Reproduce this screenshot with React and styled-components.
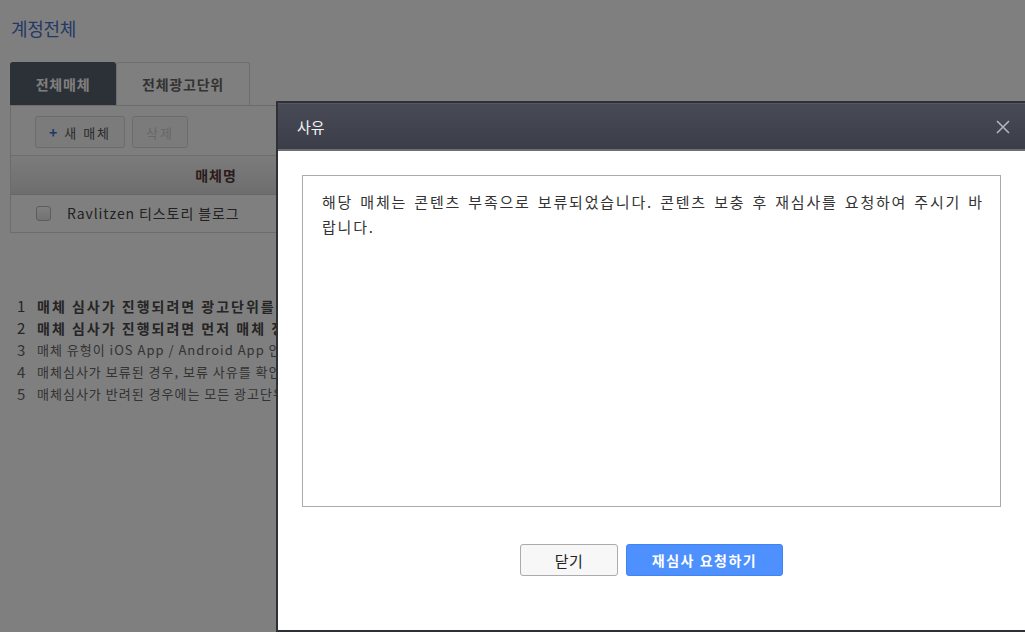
import React from 'react';
import styled, {createGlobalStyle} from "styled-components";

const GlobalStyle = createGlobalStyle`
  html, body {
    margin: 0;
    padding: 0;
    overflow: hidden;
    background: #fff;
  }
  body {
    font-family: "Noto Sans CJK KR", "Noto Sans", sans-serif;
    font-size: 13px;
    color: #555;
  }
`

const Page = styled.div`
  padding: 14px 10px 0 10px;
  width: 1005px;
`

const PageTitle = styled.h1`
  margin: 0 0 20px 1px;
  font-size: 18px;
  font-weight: normal;
  color: #4a72cc;
  letter-spacing: -0.3px;
  line-height: 28px;
`

const Tabs = styled.div`
  display: flex;
  height: 43px;
`

const Tab = styled.div`
  width: ${p => p.$w}px;
  display: flex;
  align-items: center;
  justify-content: center;
  font-size: 14px;
  font-weight: bold;
  letter-spacing: 0.8px;
  border: 1px solid ${p => p.$active ? '#58606e' : '#dcdcdc'};
  border-bottom: none;
  border-radius: 3px 3px 0 0;
  background: ${p => p.$active ? '#58606e' : '#fff'};
  color: ${p => p.$active ? '#fff' : '#666'};
  box-sizing: border-box;
`

const Panel = styled.div`
  border: 1px solid #d8d8d8;
  background: #fcfcfc;
`

const Toolbar = styled.div`
  display: flex;
  gap: 7px;
  padding: 10px 24px 7px 24px;
  border-bottom: 1px solid #d8d8d8;
`

const ToolButton = styled.div`
  height: 32px;
  padding: 0 13px;
  display: flex;
  align-items: center;
  gap: 5px;
  box-sizing: border-box;
  border: 1px solid #d6d6d6;
  border-radius: 3px;
  background: #f6f6f6;
  font-size: 13px;
  color: ${p => p.$disabled ? '#d0d0d0' : '#555'};
  letter-spacing: 2px;
`

const Plus = styled.span`
  color: #3f6fd8;
  font-weight: bold;
  font-size: 14px;
`

const Columns = styled.div`
  display: grid;
  grid-template-columns: 48px 314px 1fr;
  align-items: center;
`

const TableHead = styled(Columns)`
  height: 38px;
  background: linear-gradient(#f8f8f8, #dcdcdc);
  border-bottom: 1px solid #cfcfcf;
  font-weight: bold;
  font-size: 14px;
  letter-spacing: 1px;
  color: #543838;
`

const HeadCell = styled.div`
  text-align: center;
`

const TableRow = styled(Columns)`
  height: 37px;
  background: #fff;
  font-size: 14px;
  color: #444;
  letter-spacing: 0.9px;
`

const CheckCell = styled.div`
  padding-left: 25px;
  display: flex;
`

const Check = styled.span`
  width: 13px;
  height: 13px;
  border: 1px solid #bbb;
  border-radius: 3px;
  background: linear-gradient(#fff, #e6e6e6);
`

const NameCell = styled.div`
  padding-left: 8px;
  margin-top: -2px;
  white-space: nowrap;
`

const Notes = styled.ol`
  margin: 62px 0 0 0;
  padding: 0 0 0 7px;
  list-style: none;
`

const Note = styled.li`
  display: flex;
  gap: 11px;
  line-height: 22px;
  font-size: ${p => p.$bold ? '14px' : '13px'};
  font-weight: ${p => p.$bold ? 'bold' : 'normal'};
  color: ${p => p.$bold ? '#4a4a4a' : '#666'};
  letter-spacing: ${p => p.$bold ? '2px' : '1px'};
  white-space: nowrap;
`

const Num = styled.span`
  width: 9px;
  font-weight: normal;
  font-size: 15px;
`

const Overlay = styled.div`
  position: fixed;
  inset: 0;
  background: rgba(0, 0, 0, 0.5);
`

const Modal = styled.div`
  position: fixed;
  left: 276px;
  top: 101px;
  width: 751px;
  height: 531px;
  box-sizing: border-box;
  border: 2px solid #2e3036;
  background: #fff;
  display: flex;
  flex-direction: column;
`

const ModalHeader = styled.div`
  height: 45px;
  display: flex;
  align-items: center;
  justify-content: space-between;
  padding: 0 14px 0 19px;
  background: linear-gradient(#484b56, #3b3e48);
  border-top: 1px solid #565964;
  border-bottom: 2px solid #6c6e75;
`

const ModalTitle = styled.span`
  font-size: 15px;
  color: #f0f0f0;
`

const Close = styled.button`
  border: none;
  background: none;
  padding: 0;
  width: 16px;
  height: 16px;
  display: flex;
  cursor: pointer;
`

const ModalBody = styled.div`
  padding: 24px 24px 0 24px;
  display: flex;
  flex-direction: column;
`

const Reason = styled.div`
  height: 332px;
  box-sizing: border-box;
  border: 1px solid #ababab;
  padding: 13px 12px 0 19px;
  font-size: 15px;
  line-height: 25px;
  letter-spacing: 1.8px;
  word-spacing: 2px;
  color: #333;
`

const Actions = styled.div`
  display: flex;
  justify-content: center;
  gap: 8px;
  margin-top: 37px;
`

const Button = styled.button`
  height: 32px;
  width: ${p => p.$w}px;
  border-radius: 3px;
  border: 1px solid ${p => p.$primary ? '#3f84f5' : '#ababab'};
  background: ${p => p.$primary ? '#4d90fe' : '#f7f7f7'};
  color: ${p => p.$primary ? '#fff' : '#222'};
  font-family: "Noto Sans CJK KR", sans-serif;
  font-size: ${p => p.$primary ? '14px' : '15px'};
  font-weight: ${p => p.$primary ? 'bold' : 'normal'};
  letter-spacing: ${p => p.$primary ? '1.5px' : '0.5px'};
  cursor: pointer;
`

const notes = [
    {bold: true, text: '매체 심사가 진행되려면 광고단위를 1개 이상 등록해 주셔야 합니다.'},
    {bold: true, text: '매체 심사가 진행되려면 먼저 매체 정보를 정확하게 입력해 주셔야 합니다.'},
    {bold: false, text: '매체 유형이 iOS App / Android App 인 경우 앱 정보를 확인합니다.'},
    {bold: false, text: '매체심사가 보류된 경우, 보류 사유를 확인하고 재심사를 요청하세요.'},
    {bold: false, text: '매체심사가 반려된 경우에는 모든 광고단위가 중지됩니다.'},
];

const App = () => {
    return (
        <>
            <GlobalStyle/>
            <Page>
                <PageTitle>계정전체</PageTitle>
                <Tabs>
                    <Tab $w={106} $active>전체매체</Tab>
                    <Tab $w={134}>전체광고단위</Tab>
                </Tabs>
                <Panel>
                    <Toolbar>
                        <ToolButton><Plus>+</Plus>새 매체</ToolButton>
                        <ToolButton $disabled>삭제</ToolButton>
                    </Toolbar>
                    <TableHead>
                        <div/>
                        <HeadCell>매체명</HeadCell>
                        <HeadCell>상태</HeadCell>
                    </TableHead>
                    <TableRow>
                        <CheckCell><Check/></CheckCell>
                        <NameCell>Ravlitzen 티스토리 블로그</NameCell>
                        <div/>
                    </TableRow>
                </Panel>
                <Notes>
                    {notes.map((n, i) => (
                        <Note key={i} $bold={n.bold}>
                            <Num>{i + 1}</Num>
                            <span>{n.text}</span>
                        </Note>
                    ))}
                </Notes>
            </Page>
            <Overlay/>
            <Modal>
                <ModalHeader>
                    <ModalTitle>사유</ModalTitle>
                    <Close aria-label="닫기">
                        <svg width="16" height="16" viewBox="0 0 16 16">
                            <path d="M2 2 L14 14 M14 2 L2 14" stroke="#b4b5bc" strokeWidth="1.6" fill="none"/>
                        </svg>
                    </Close>
                </ModalHeader>
                <ModalBody>
                    <Reason>
                        해당 매체는 콘텐츠 부족으로 보류되었습니다. 콘텐츠 보충 후 재심사를 요청하여 주시기 바랍니다.
                    </Reason>
                    <Actions>
                        <Button $w={98}>닫기</Button>
                        <Button $w={157} $primary>재심사 요청하기</Button>
                    </Actions>
                </ModalBody>
            </Modal>
        </>
    );
};

export default App;
